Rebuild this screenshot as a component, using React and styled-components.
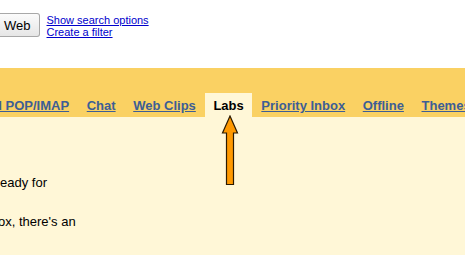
import React from 'react'
import styled, { createGlobalStyle } from 'styled-components'

const Global = createGlobalStyle`
  html, body { margin: 0; padding: 0; }
  body {
    width: 465px;
    height: 255px;
    overflow: hidden;
    background: #fff7d7;
    font-family: "Liberation Sans", Arial, sans-serif;
  }
`

const Page = styled.div`
  position: relative;
  width: 465px;
  height: 255px;
  overflow: hidden;
  display: flex;
  flex-direction: column;
`

const SearchBar = styled.div`
  height: 68px;
  background: #ffffff;
  display: flex;
  align-items: flex-start;
  gap: 7px;
  padding-top: 13px;
  box-sizing: border-box;
`

const SearchButton = styled.button`
  height: 24px;
  margin-left: -1px;
  padding: 0 8px 0 5px;
  border: 1px solid #a8a8a8;
  border-left: none;
  border-radius: 0 3px 3px 0;
  background: linear-gradient(#fbfbfb, #e6e6e6);
  font-family: "Liberation Sans", Arial, sans-serif;
  font-size: 13px;
  color: #000;
`

const LinkStack = styled.div`
  display: flex;
  flex-direction: column;
  padding-top: 1px;
`

const SmallLink = styled.a`
  font-size: 11px;
  line-height: 12px;
  color: #0000cc;
  text-decoration: underline;
`

const TabBand = styled.div`
  height: 49px;
  background: #fad163;
  display: flex;
  align-items: flex-end;
  box-sizing: border-box;
`

const TabRow = styled.div`
  display: flex;
  gap: 1.6px;
  margin-left: -14px;
  white-space: nowrap;
`

const Tab = styled.div`
  height: 24px;
  padding: 1px 8px 0;
  display: flex;
  align-items: center;
  font-size: 13px;
  font-weight: bold;
  background: ${p => (p.$active ? '#fff7d7' : 'transparent')};
  color: ${p => (p.$active ? '#000' : '#3d5e95')};
  text-decoration: ${p => (p.$active ? 'none' : 'underline')};
  box-sizing: border-box;
`

const Content = styled.div`
  flex: 1;
  background: #fff7d7;
  padding-top: 58px;
  font-size: 13px;
  color: #000;
`

const Para = styled.p`
  margin: 0 0 24px ${p => p.$shift || 0}px;
  line-height: 15px;
  white-space: nowrap;
`

const ArrowWrap = styled.svg`
  position: absolute;
  left: 221px;
  top: 115px;
`

const tabs = ['d POP/IMAP', 'Chat', 'Web Clips', 'Labs', 'Priority Inbox', 'Offline', 'Themes']

export default function App() {
  return (
    <Page>
      <Global />
      <SearchBar>
        <SearchButton>Web</SearchButton>
        <LinkStack>
          <SmallLink>Show search options</SmallLink>
          <SmallLink>Create a filter</SmallLink>
        </LinkStack>
      </SearchBar>
      <TabBand>
        <TabRow>
          {tabs.map(t => (
            <Tab key={t} $active={t === 'Labs'}>{t}</Tab>
          ))}
        </TabRow>
      </TabBand>
      <Content>
        <Para>eady for</Para>
        <Para $shift={-2}>ox, there's an</Para>
      </Content>
      <ArrowWrap width="18" height="72" viewBox="0 0 18 72">
        <path
          d="M9 1 L16.5 18 L12.5 18 L12.5 69.5 L5.5 69.5 L5.5 18 L1.5 18 Z"
          fill="#ff9900"
          stroke="#2b1a00"
          strokeWidth="1.2"
          strokeLinejoin="miter"
        />
      </ArrowWrap>
    </Page>
  )
}
